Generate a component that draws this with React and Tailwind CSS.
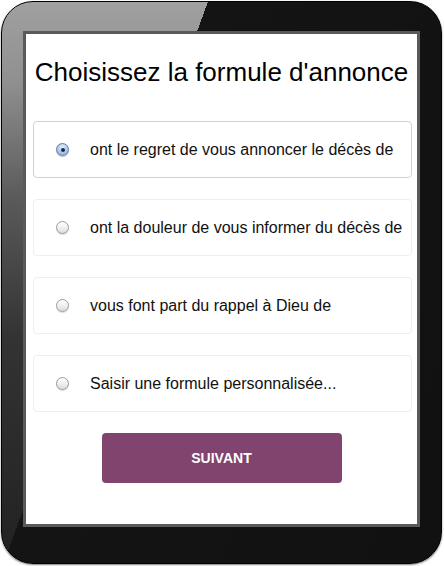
import React, { useState } from 'react';

const options = [
  'ont le regret de vous annoncer le décès de',
  'ont la douleur de vous informer du décès de',
  'vous font part du rappel à Dieu de',
  'Saisir une formule personnalisée...',
];

// macOS style radio button
function Radio({ checked }) {
  if (checked) {
    return (
      <span className="w-[13px] h-[13px] shrink-0 rounded-full border border-[#5d7fb0] bg-[radial-gradient(circle_at_50%_30%,#e6f0fb_0%,#a9c7ec_55%,#7fa6db_100%)] flex items-center justify-center shadow-[0_1px_1px_rgba(0,0,0,0.25)]">
        <span className="w-[4px] h-[4px] rounded-full bg-[#1d2a3d]" />
      </span>
    );
  }
  return (
    <span className="w-[13px] h-[13px] shrink-0 rounded-full border border-[#9b9b9b] bg-[linear-gradient(to_bottom,#ffffff_0%,#f0f0f0_50%,#dcdcdc_100%)] shadow-[0_1px_1px_rgba(0,0,0,0.15)]" />
  );
}

export default function App() {
  const [selected, setSelected] = useState(0);

  return (
    <div className="w-[444px] h-[566px] bg-white p-[1px]" style={{ fontFamily: '"Liberation Sans", Arial, sans-serif' }}>
      {/* Tablet frame */}
      <div className="w-[441px] h-[563px] rounded-[32px] border border-black shadow-[0_1px_2px_rgba(0,0,0,0.5)] bg-[linear-gradient(110deg,transparent_32%,#141414_32%,#111111_100%),linear-gradient(to_bottom,#a0a0a0_0%,#909090_14%,#5a5a5a_35%,#333333_60%,#222222_100%)] pt-[29px] pl-[21px] pr-[21px] pb-[36px]">
        {/* Screen */}
        <div className="h-full border-[3px] border-[#5a5a5a] bg-white flex flex-col items-stretch">
          <h1 className="pt-[23px] text-center text-[26px] leading-[30px] text-black font-normal">
            Choisissez la formule d'annonce
          </h1>

          <div className="mt-[34px] pl-[7px] pr-[5px] flex flex-col gap-[21px]">
            {options.map((opt, i) => (
              <button
                key={i}
                onClick={() => setSelected(i)}
                className={`h-[57px] rounded-[4px] border flex items-center pl-[22px] text-left ${
                  selected === i ? 'border-[#cdd2da]' : 'border-[#eeeeee]'
                }`}
              >
                <Radio checked={selected === i} />
                <span className="ml-[21px] text-[16px] text-[#111] whitespace-nowrap">{opt}</span>
              </button>
            ))}
          </div>

          <div className="mt-[21px] flex justify-center">
            <button className="w-[240px] h-[50px] rounded-[4px] bg-[#80446e] text-white text-[14px] font-bold">
              SUIVANT
            </button>
          </div>
        </div>
      </div>
    </div>
  );
}
